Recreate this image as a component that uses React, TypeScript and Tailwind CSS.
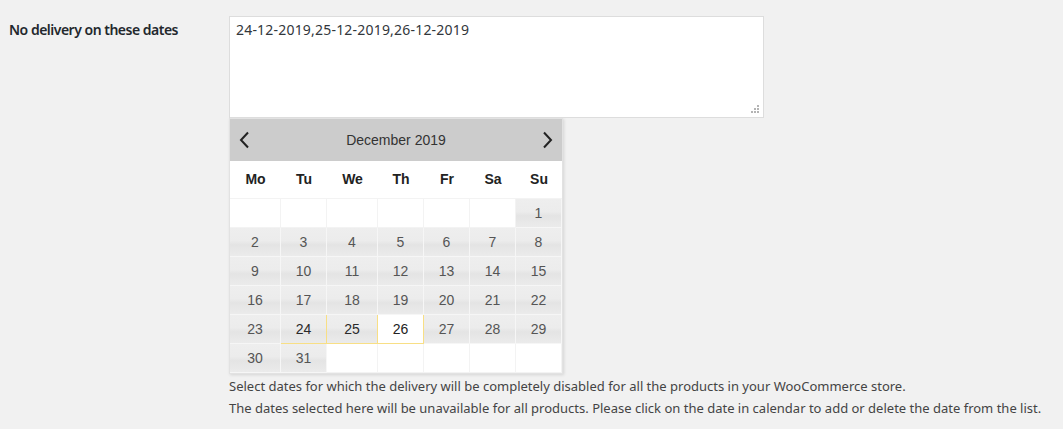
import React from "react";

const COLS = ["w-[51px]", "w-[46px]", "w-[51px]", "w-[46px]", "w-[46px]", "w-[46px]", "w-[46px]"];
const DAYS = ["Mo", "Tu", "We", "Th", "Fr", "Sa", "Su"];

function Chevron({ dir }: { dir: "left" | "right" }) {
  return (
    <svg width="11" height="18" viewBox="0 0 11 18" fill="none">
      <path
        d={dir === "left" ? "M9 1.5 L2 9 L9 16.5" : "M2 1.5 L9 9 L2 16.5"}
        stroke="#222"
        strokeWidth="2"
      />
    </svg>
  );
}

function Cell({ day, col }: { day: number | null; col: number }) {
  const w = COLS[col];
  if (day === null) {
    return <div className={`${w} h-[29px] bg-white border-r border-b border-[#f3f3f3]`} />;
  }
  const selected = day === 24 || day === 25;
  const today = day === 26;
  if (today) {
    return (
      <div className={`${w} h-[29px] bg-white border-r border-b border-[#f8df85] flex items-center justify-center text-[14px] text-[#222]`}>
        {day}
      </div>
    );
  }
  if (selected) {
    return (
      <div className={`${w} h-[29px] bg-[linear-gradient(#eeeeee,#ececec_45%,#e4e4e4_60%,#ebebeb)] border-r border-b border-[#f8df85] flex items-center justify-center text-[14px] text-[#2a2a2a]`}>
        {day}
      </div>
    );
  }
  return (
    <div className={`${w} h-[29px] bg-[linear-gradient(#eeeeee,#ececec_45%,#e4e4e4_60%,#ebebeb)] border-r border-b border-[#f6f6f6] flex items-center justify-center text-[14px] text-[#555]`}>
      {day}
    </div>
  );
}

export default function App() {
  const cells: (number | null)[] = [null, null, null, null, null, null];
  for (let d = 1; d <= 31; d++) cells.push(d);
  while (cells.length < 42) cells.push(null);
  const rows: (number | null)[][] = [];
  for (let i = 0; i < 6; i++) rows.push(cells.slice(i * 7, i * 7 + 7));

  return (
    <div className="w-full h-[429px] bg-[#f1f1f1] flex overflow-hidden" style={{ fontFamily: '"Noto Sans", "Open Sans", sans-serif' }}>
      <div className="w-[229px] shrink-0 pl-[9px] pt-[20px]">
        <div className="text-[14px] leading-[20px] font-semibold tracking-[-0.5px] text-[#23282d]">No delivery on these dates</div>
      </div>
      <div className="flex flex-col pt-[16px]">
        <div className="relative w-[535px] h-[102px] bg-white border border-[#dddddd] px-[6px] pt-[3px] text-[14px] leading-[20px] tracking-[0.2px] text-[#32373c]">
          24-12-2019,25-12-2019,26-12-2019
          <svg className="absolute right-[4px] bottom-[4px]" width="8" height="8" viewBox="0 0 8 8">
            <rect x="6" y="0" width="2" height="2" fill="#b4b4b4" />
            <rect x="3" y="3" width="2" height="2" fill="#b4b4b4" />
            <rect x="6" y="3" width="2" height="2" fill="#b4b4b4" />
            <rect x="0" y="6" width="2" height="2" fill="#b4b4b4" />
            <rect x="3" y="6" width="2" height="2" fill="#b4b4b4" />
            <rect x="6" y="6" width="2" height="2" fill="#b4b4b4" />
          </svg>
        </div>
        <div
          className="w-[334px] bg-white border border-[#e2e2e2] shadow-[1px_1px_3px_rgba(0,0,0,0.12)]"
          style={{ fontFamily: '"Liberation Sans", Arial, sans-serif' }}
        >
          <div className="h-[42px] bg-[#cccccc] flex items-center justify-between px-[9px]">
            <Chevron dir="left" />
            <span className="text-[14px] text-[#333]">December 2019</span>
            <Chevron dir="right" />
          </div>
          <div className="flex h-[38px] border-b border-[#f3f3f3]">
            {DAYS.map((d, i) => (
              <div key={d} className={`${COLS[i]} flex items-center justify-center text-[14px] font-bold text-[#222]`}>
                {d}
              </div>
            ))}
          </div>
          {rows.map((r, ri) => (
            <div key={ri} className="flex">
              {r.map((d, ci) => (
                <Cell key={ci} day={d} col={ci} />
              ))}
            </div>
          ))}
        </div>
        <div className="mt-[1px] text-[13px] leading-[22px] text-[#444]">
          <div>Select dates for which the delivery will be completely disabled for all the products in your WooCommerce store.</div>
          <div className="whitespace-nowrap">The dates selected here will be unavailable for all products. Please click on the date in calendar to add or delete the date from the list.</div>
        </div>
      </div>
    </div>
  );
}
